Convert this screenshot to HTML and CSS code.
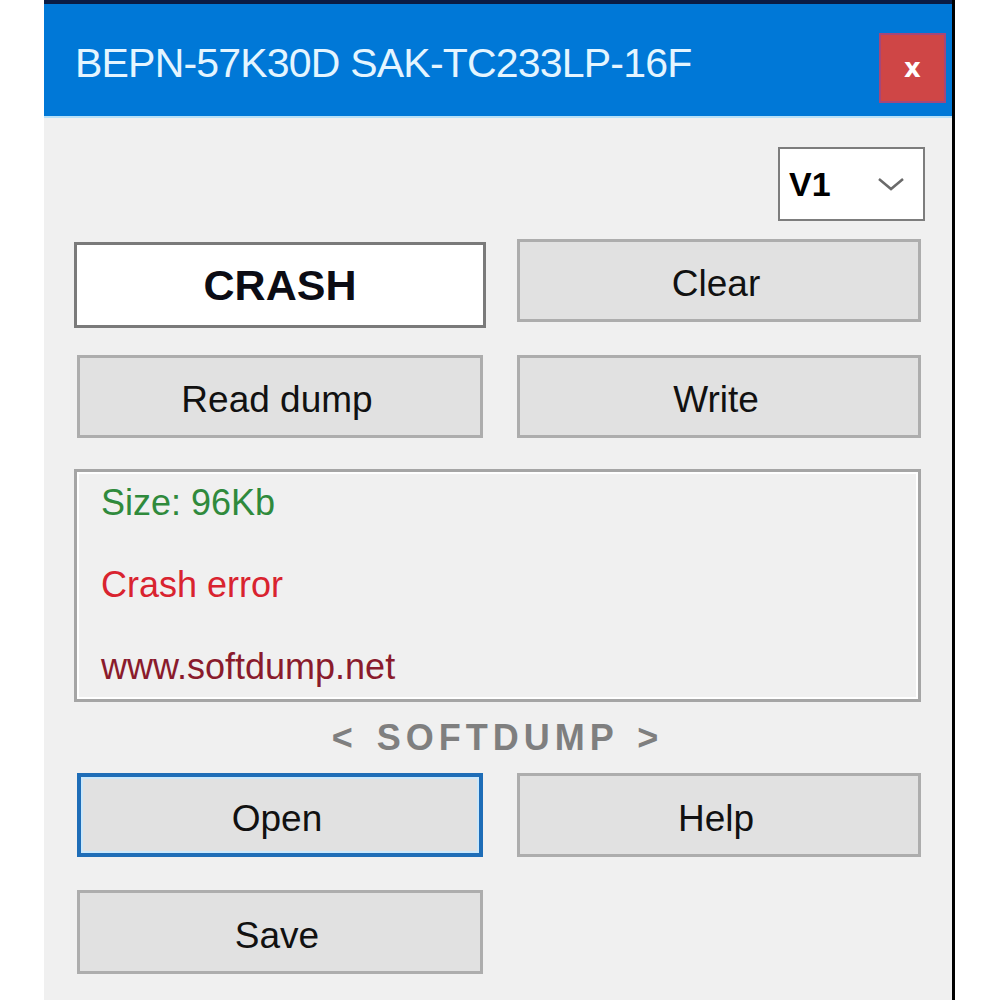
FILE: index.html
```html
<!DOCTYPE html>
<html>
<head>
    <title>BEPN-57K30D SAK-TC233LP-16F</title>
    <link rel="stylesheet" href="styles.css">
</head>
<body>
    <div class="window">
        <div class="titlebar">
            <span class="title">BEPN-57K30D SAK-TC233LP-16F</span>
            <button class="close">x</button>
        </div>
        <div class="content">
            <div class="version-row">
                <div class="version-select">
                    <span>V1</span>
                    <svg width="28" height="16" viewBox="0 0 28 16">
                        <polyline points="2,3 14,13 26,3" fill="none" stroke="#6a6a6a" stroke-width="2.5"/>
                    </svg>
                </div>
            </div>
            <div class="row row-first">
                <div class="status">CRASH</div>
                <button class="btn btn-right">Clear</button>
            </div>
            <div class="row row-second">
                <button class="btn btn-left">Read dump</button>
                <button class="btn btn-right">Write</button>
            </div>
            <div class="log">
                <div class="log-line log-info">Size: 96Kb</div>
                <div class="log-line log-error">Crash error</div>
                <div class="log-line log-link">www.softdump.net</div>
            </div>
            <div class="brand">&lt; SOFTDUMP &gt;</div>
            <div class="row row-third">
                <button class="btn btn-tall btn-left btn-focused">Open</button>
                <button class="btn btn-tall btn-right">Help</button>
            </div>
            <div class="row row-last">
                <button class="btn btn-tall btn-left">Save</button>
            </div>
        </div>
    </div>
</body>
</html>
```

FILE: styles.css
```css
body {
    margin: 0;
    background-color: #fff;
    font-family: "Liberation Sans", Arial, sans-serif;
}

.window {
    margin-left: 44px;
    width: 908px;
    height: 1000px;
    background-color: #f0f0f0;
    border-right: 3px solid #000;
    overflow: hidden;
}

.titlebar {
    display: flex;
    align-items: flex-start;
    justify-content: space-between;
    height: 112px;
    background-color: #0078d7;
    border-top: 4px solid #0a1c45;
    border-bottom: 2px solid #b9e1f8;
}

.title {
    margin-top: 34px;
    padding-left: 31px;
    color: #e4f5ff;
    font-size: 41px;
    line-height: 50px;
    letter-spacing: -0.8px;
}

.close {
    margin-top: 29px;
    margin-right: 6px;
    width: 67px;
    height: 70px;
    padding: 0;
    background-color: #cf4646;
    border: 2px solid #a4477a;
    color: #fff;
    font-family: "DejaVu Sans", sans-serif;
    font-weight: bold;
    font-size: 26px;
    line-height: 60px;
}

.content {
    padding: 0 31px 0 30px;
}

.version-row {
    display: flex;
    justify-content: flex-end;
    padding-top: 29px;
    margin-right: -4px;
}

.version-select {
    display: flex;
    align-items: center;
    justify-content: space-between;
    box-sizing: border-box;
    width: 147px;
    height: 74px;
    padding: 0 18px 0 9px;
    background-color: #fff;
    border: 2px solid #7d7d7d;
    font-weight: bold;
    font-size: 34px;
}

.row {
    display: flex;
    align-items: flex-start;
}

.row-first {
    margin-top: 18px;
}

.row-second {
    margin-top: 27px;
}

.row-last {
    margin-top: 33px;
}

.status {
    box-sizing: border-box;
    width: 412px;
    height: 86px;
    margin-top: 3px;
    background-color: #fff;
    border: 3px solid #7a7a7a;
    text-align: center;
    font-weight: bold;
    font-size: 43px;
    line-height: 80px;
    color: #0c0c14;
}

.btn {
    box-sizing: border-box;
    height: 83px;
    padding: 7px 6px 0 0;
    background-color: #e1e1e1;
    border: 3px solid #adadad;
    font-family: "Liberation Sans", Arial, sans-serif;
    font-size: 37px;
    color: #111;
}

.btn-tall {
    height: 84px;
}

.btn-left {
    width: 406px;
    margin-left: 3px;
}

.btn-right {
    width: 404px;
    margin-left: auto;
}

.btn-focused {
    border: 4px solid #1e6db7;
    box-shadow: inset 0 0 0 2px #cbe8fb;
}

.log {
    box-sizing: border-box;
    display: flex;
    flex-direction: column;
    gap: 42px;
    height: 233px;
    margin-top: 31px;
    padding: 11px 0 0 24px;
    border: 3px solid #a5a5a5;
    box-shadow: inset 0 0 0 2px #fff;
    font-size: 36px;
}

.log-line {
    line-height: 40px;
}

.log-info {
    color: #2f8a3c;
}

.log-error {
    color: #d9232f;
}

.log-link {
    color: #8a1b2c;
}

.brand {
    height: 71px;
    text-align: center;
    font-weight: bold;
    font-size: 36px;
    line-height: 71px;
    letter-spacing: 5px;
    word-spacing: 4px;
    color: #7f7f7f;
}
```
